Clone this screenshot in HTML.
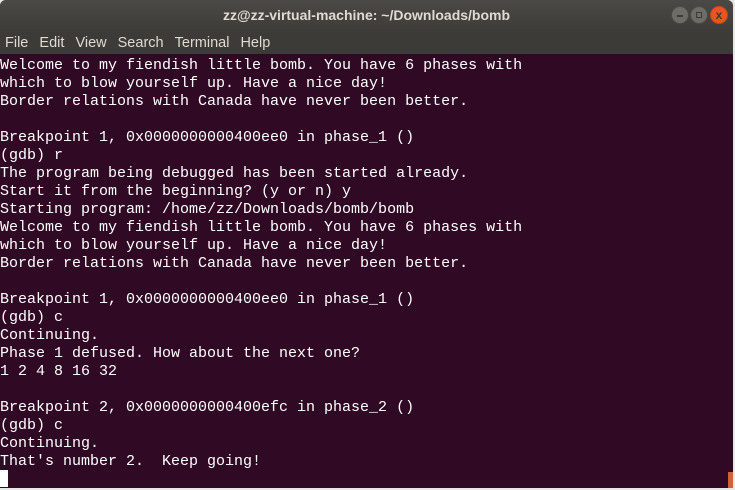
<!DOCTYPE html>
<html><head><style>
html,body{margin:0;padding:0;width:735px;height:490px;overflow:hidden;background:#e8e8e8;}
#win{position:absolute;left:0;top:0;width:733px;height:488px;background:#300a24;border-radius:6px 6px 0 0;overflow:hidden;}
#title{position:absolute;left:0;top:0;width:733px;height:32px;background:linear-gradient(#4a4945,#3d3c38);color:#dfdbd2;font:bold 14px "Liberation Sans",sans-serif;text-align:center;line-height:30px;}
#menu{position:absolute;left:0;top:32px;width:733px;height:22px;background:#3c3b37;color:#dfdbd2;font:14.5px "Liberation Sans",sans-serif;line-height:22px;}
#menu span{margin-left:5px;margin-right:2px;}
.b{position:absolute;top:6px;width:18px;height:18px;border-radius:50%;background:#6e6c66;border:1px solid #4c4b47;box-sizing:border-box;}
#term{position:absolute;left:0;top:57px;color:#fff;font:15px/18px "Liberation Mono",monospace;white-space:pre;margin:0;}
#cur{position:absolute;left:0;top:470px;width:8px;height:17px;background:#fff;}
#sb{position:absolute;left:728px;top:472px;width:5px;height:16px;background:#d0623b;}
</style></head><body>
<div id="win">
<div id="title">zz@zz-virtual-machine: ~/Downloads/bomb</div>
<div class="b" style="left:671px"><div style="position:absolute;left:5px;top:8px;width:6px;height:1.5px;background:#3c3b37"></div></div>
<div class="b" style="left:690px"><div style="position:absolute;left:5px;top:5px;width:6px;height:6px;border:1.3px solid #3c3b37;box-sizing:border-box"></div></div>
<div class="b" style="left:710px;background:#e9541f;border-color:#c4471a;color:#3c3b37;font:bold 12px 'Liberation Sans',sans-serif;text-align:center;line-height:16px">x</div>
<div id="menu"><span>File</span> <span>Edit</span> <span>View</span> <span>Search</span> <span>Terminal</span> <span>Help</span></div>
<pre id="term">Welcome to my fiendish little bomb. You have 6 phases with
which to blow yourself up. Have a nice day!
Border relations with Canada have never been better.

Breakpoint 1, 0x0000000000400ee0 in phase_1 ()
(gdb) r
The program being debugged has been started already.
Start it from the beginning? (y or n) y
Starting program: /home/zz/Downloads/bomb/bomb 
Welcome to my fiendish little bomb. You have 6 phases with
which to blow yourself up. Have a nice day!
Border relations with Canada have never been better.

Breakpoint 1, 0x0000000000400ee0 in phase_1 ()
(gdb) c
Continuing.
Phase 1 defused. How about the next one?
1 2 4 8 16 32

Breakpoint 2, 0x0000000000400efc in phase_2 ()
(gdb) c
Continuing.
That's number 2.  Keep going!</pre>
<div id="cur"></div>
<div id="sb"></div>
</div>
</body></html>
